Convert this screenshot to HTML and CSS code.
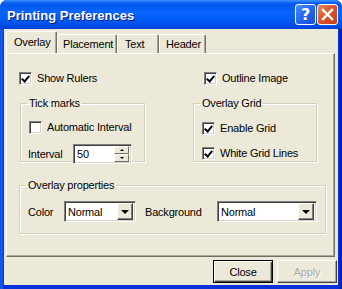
FILE: index.html
```html
<!DOCTYPE html>
<html lang="en">
<head>
  <meta charset="UTF-8" />
  <title>Printing Preferences</title>
  <link rel="stylesheet" href="styles.css">
</head>
<body>
  <div class="window">
    <div class="titlebar">
      <span class="title">Printing Preferences</span>
      <div class="caption-btns">
        <span class="cap-btn help">?</span>
        <span class="cap-btn close">
          <svg width="13" height="13" viewBox="0 0 13 13">
            <path d="M2 2 L11 11 M11 2 L2 11" stroke="#fff" stroke-width="2.4" stroke-linecap="square"/>
          </svg>
        </span>
      </div>
    </div>

    <div class="client">
      <div class="tabs">
        <span class="tab active">Overlay</span>
        <span class="tab tab-placement">Placement</span>
        <span class="tab tab-text">Text</span>
        <span class="tab tab-header">Header</span>
      </div>

      <div class="panel">
        <div class="top-row">
          <label class="check"><span class="box on"></span>Show Rulers</label>
          <label class="check"><span class="box on"></span>Outline Image</label>
        </div>

        <div class="groups">
          <fieldset class="group tick">
            <legend>Tick marks</legend>
            <label class="check"><span class="box"></span>Automatic Interval</label>
            <div class="field">
              <span class="lbl">Interval</span>
              <div class="spin">
                <span class="val">50</span>
                <div class="spin-btns">
                  <span class="sbtn"><i class="up"></i></span>
                  <span class="sbtn"><i class="down"></i></span>
                </div>
              </div>
            </div>
          </fieldset>

          <fieldset class="group grid">
            <legend>Overlay Grid</legend>
            <label class="check"><span class="box on"></span>Enable Grid</label>
            <label class="check"><span class="box on"></span>White Grid Lines</label>
          </fieldset>
        </div>

        <fieldset class="group props">
          <legend>Overlay properties</legend>
          <div class="field">
            <span class="lbl color-lbl">Color</span>
            <div class="combo small"><span class="val">Normal</span><span class="drop"><i></i></span></div>
            <span class="lbl bg-lbl">Background</span>
            <div class="combo wide"><span class="val">Normal</span><span class="drop"><i></i></span></div>
          </div>
        </fieldset>
      </div>

      <div class="buttons">
        <button class="btn default">Close</button>
        <button class="btn" disabled>Apply</button>
      </div>
    </div>
  </div>
</body>
</html>
```

FILE: styles.css
```css
* {
  margin: 0;
  padding: 0;
  box-sizing: border-box;
}

body {
  background: #fff;
  font-family: 'Liberation Sans', Arial, sans-serif;
  font-size: 11px;
  letter-spacing: -0.2px;
  color: #000;
}

.window {
  width: 342px;
  height: 289px;
  border-radius: 7px 7px 0 0;
  display: flex;
  flex-direction: column;
  padding: 0 4px 4px 4px;
  background: linear-gradient(to right, #0a3ee0 0, #166aee 1px, #0831d9 4px, #0831d9 338px, #001ea0 342px);
}

/* title bar */
.titlebar {
  height: 29px;
  margin: 0 -4px;
  padding: 0 4px 0 7px;
  display: flex;
  align-items: center;
  justify-content: space-between;
  border-radius: 7px 7px 0 0;
  background: linear-gradient(to bottom, #3d95ff 0, #0a5ff0 3px, #0058ee 6px, #0a66ff 12px, #005cf4 20px, #004ee6 25px, #0040d8 29px);
}

.title {
  color: #fff;
  font-family: 'Liberation Sans', Arial, sans-serif;
  font-weight: bold;
  font-size: 13px;
  letter-spacing: 0;
  text-shadow: 1px 1px #0a1883;
  margin-top: 1px;
}

.caption-btns {
  display: flex;
  gap: 1px;
}

.cap-btn {
  width: 21px;
  height: 21px;
  border: 1px solid #fff;
  border-radius: 3px;
  display: flex;
  align-items: center;
  justify-content: center;
}

.help {
  background: linear-gradient(135deg, #4a8cff 0%, #2663ef 50%, #1a4fd8 100%);
  color: #fff;
  font-family: 'DejaVu Sans', sans-serif;
  font-weight: bold;
  font-size: 16px;
}

.close {
  background: linear-gradient(135deg, #e9885e 0%, #d8542a 50%, #c2401b 100%);
}

/* client area */
.client {
  flex: 1;
  background: #ece9d8;
  display: flex;
  flex-direction: column;
  padding: 0 1px 0 2px;
}

.tabs {
  display: flex;
  align-items: flex-end;
  height: 24px;
  padding-left: 2px;
}

.tab {
  height: 19px;
  padding: 3px 0 0 5px;
  background: #ece9d8;
  border: 1px solid #fff;
  border-bottom: none;
  border-right-color: #716f64;
  border-radius: 2px 2px 0 0;
  box-shadow: inset -1px 0 #aca899;
}

.tab.active {
  width: 51px;
  height: 22px;
  padding: 4px 0 0 7px;
  margin-left: -2px;
  position: relative;
  z-index: 1;
}

.tab-placement { width: 60px; }
.tab-text { width: 42px; padding-left: 7px; }
.tab-header { width: 47px; padding-left: 6px; }

.panel {
  height: 204px;
  margin-right: 2px;
  border: 1px solid #fff;
  border-right-color: #716f64;
  border-bottom-color: #716f64;
  box-shadow: inset -1px -1px #aca899;
  padding: 16px 13px 0 13px;
}

.top-row {
  display: grid;
  grid-template-columns: 185px auto;
  height: 18px;
  margin-left: -1px;
}

.check {
  display: flex;
  align-items: center;
  gap: 5px;
  height: 16px;
}

.box {
  width: 13px;
  height: 13px;
  background: #fff;
  border: 1px solid;
  border-color: #808080 #fff #fff #808080;
  box-shadow: inset 1px 1px #404040, inset -1px -1px #d4d0c8;
  position: relative;
}

.box.on::after {
  content: "";
  position: absolute;
  left: 3px;
  top: 1px;
  width: 3px;
  height: 6px;
  border: solid #000;
  border-width: 0 2px 2px 0;
  transform: rotate(40deg);
}

.groups {
  display: flex;
  gap: 48px;
  margin-top: 9px;
}

.group {
  border: 1px solid #d0d0bf;
  box-shadow: 1px 1px #fff, inset 1px 1px #fff;
  padding: 0 8px;
}

.group legend {
  padding: 0 2px;
  margin-left: -2px;
  color: #000;
}

.tick {
  width: 125px;
  height: 65px;
}

.tick .check {
  margin-top: 10px;
}

.grid {
  width: 124px;
  height: 65px;
}

.grid .check {
  margin-top: 11px;
}

.grid .check + .check {
  margin-top: 9px;
}

.field {
  display: flex;
  align-items: center;
  margin-top: 9px;
}

.lbl {
  width: 45px;
  margin-left: -1px;
}

.spin {
  width: 59px;
  height: 20px;
  background: #fff;
  border: 1px solid;
  border-color: #808080 #fff #fff #808080;
  box-shadow: inset 1px 1px #404040, inset -1px -1px #d4d0c8;
  display: flex;
  align-items: center;
  padding: 0 2px 0 3px;
  justify-content: space-between;
}

.spin-btns {
  display: flex;
  flex-direction: column;
  width: 15px;
  height: 16px;
}

.sbtn {
  flex: 1;
  background: #ece9d8;
  border: 1px solid;
  border-color: #fff #716f64 #716f64 #fff;
  display: flex;
  align-items: center;
  justify-content: center;
}

.sbtn i {
  width: 0;
  height: 0;
  border-left: 2px solid transparent;
  border-right: 2px solid transparent;
}

.sbtn .up { border-bottom: 2px solid #000; }
.sbtn .down { border-top: 2px solid #000; }

.props {
  width: 304px;
  height: 55px;
  margin-top: 17px;
  margin-left: -1px;
}

.props .field {
  margin-top: 10px;
}

.color-lbl { width: 36px; margin-left: 0; }
.bg-lbl { width: 72px; margin-left: 9px; }

.combo {
  height: 21px;
  background: #fff;
  border: 1px solid;
  border-color: #808080 #fff #fff #808080;
  box-shadow: inset 1px 1px #404040, inset -1px -1px #d4d0c8;
  display: flex;
  align-items: center;
  justify-content: space-between;
  padding: 2px 2px 2px 3px;
}

.combo.small { width: 72px; }
.combo.wide { width: 100px; }

.drop {
  width: 16px;
  height: 17px;
  background: #ece9d8;
  border: 1px solid;
  border-color: #fff #404040 #404040 #fff;
  box-shadow: inset -1px -1px #808080;
  display: flex;
  align-items: center;
  justify-content: center;
}

.drop i {
  border-left: 4px solid transparent;
  border-right: 4px solid transparent;
  border-top: 4px solid #000;
}

.buttons {
  display: flex;
  justify-content: flex-end;
  gap: 4px;
  padding: 3px 0 0 0;
}

.btn {
  width: 60px;
  height: 23px;
  font-family: 'Liberation Sans', Arial, sans-serif;
  font-size: 11px;
  letter-spacing: -0.2px;
  background: #ece9d8;
  border: 1px solid;
  border-color: #fff #404040 #404040 #fff;
  box-shadow: inset -1px -1px #aca899;
  color: #000;
}

.btn.default {
  border: 1px solid #000;
  box-shadow: inset 1px 1px #fff, inset -1px -1px #404040, inset -2px -2px #aca899;
}

.btn:disabled {
  color: #aca899;
  text-shadow: 1px 1px #fff;
}
```
